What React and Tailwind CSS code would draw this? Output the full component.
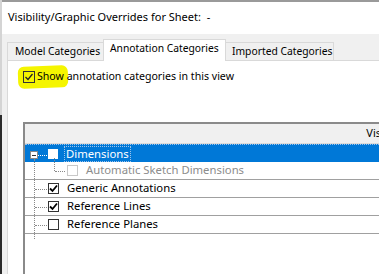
import React from "react";

const font = { fontFamily: '"Noto Sans", "Open Sans", sans-serif' };

function Check({ checked, disabled }) {
  return (
    <div
      className={
        "w-[11px] h-[11px] flex items-center justify-center border " +
        (disabled ? "border-[#c8c8c8] bg-white" : "border-[#333] bg-white")
      }
    >
      {checked && (
        <svg width="9" height="9" viewBox="0 0 9 9">
          <path d="M1 4.5 L3.5 7 L8 1.5" stroke="#000" strokeWidth="1.8" fill="none" />
        </svg>
      )}
    </div>
  );
}

function Row({ children, blue }) {
  return (
    <div
      className={
        "h-[18px] flex items-center relative shrink-0 whitespace-nowrap " +
        (blue ? "bg-[#0078d7] border-t border-dotted border-[#9ec3ea]" : "border-b border-[#a0a0a0]")
      }
    >
      {children}
    </div>
  );
}

export default function App() {
  return (
    <div className="w-[379px] h-[274px] overflow-hidden bg-[#f0f0f0] flex text-[#000]" style={font}>
      <div className="w-[2px] flex flex-col shrink-0">
        <div className="h-[115px] bg-[#d4d4d4]"></div>
        <div className="flex-1 bg-[#2b2b2b]"></div>
      </div>
      <div className="flex-1 flex flex-col min-w-0">
        <div className="h-[2px] bg-[#9a9a9a]"></div>
        <div className="h-[32px] bg-white flex items-center pl-[6px] pb-[1px] text-[11px] whitespace-nowrap">
          Visibility/Graphic Overrides for Sheet:&nbsp;&nbsp;-
        </div>
        <div className="flex-1 flex flex-col pl-[5px] pt-[4px]">
          <div className="h-[22px] flex items-end text-[10.3px] relative z-10 whitespace-nowrap">
            <div className="h-[18px] w-[97px] shrink-0 pl-[7px] flex items-center bg-[#f0f0f0] border border-[#d9d9d9] border-b-0">Model Categories</div>
            <div className="h-[22px] w-[123px] shrink-0 pl-[6px] flex items-center pb-[3px] bg-white border border-[#d9d9d9] border-b-0 -mb-px -ml-px">Annotation Categories</div>
            <div className="h-[18px] w-[108px] shrink-0 pl-[6px] flex items-center bg-[#f0f0f0] border border-[#d9d9d9] border-b-0 border-l-0">Imported Categories</div>
          </div>
          <div className="flex-1 bg-white border-l border-t border-[#d9d9d9] flex flex-col">
            <div className="flex items-center mt-[9px] ml-[15px] h-[13px] text-[10.6px] relative whitespace-nowrap">
              <div className="absolute left-[-5px] top-[-4px] w-[50px] h-[22px] bg-[#f5f500] rounded-[6px] -rotate-2"></div>
              <div className="relative w-[12px] h-[12px] border border-[#333] flex items-center justify-center shrink-0">
                <svg width="10" height="10" viewBox="0 0 10 10">
                  <path d="M1.5 5 L4 7.5 L8.5 2" stroke="#222" strokeWidth="1.3" fill="none" />
                </svg>
              </div>
              <span className="relative ml-[2px]">Show annotation categories in this view</span>
            </div>
            <div className="flex-1 mt-[39px] ml-[15px] border-l-2 border-t-2 border-[#8a8a8a] flex flex-col text-[11.3px]">
              <div className="h-[20px] shrink-0 bg-[#f0f0f0] flex items-center justify-end text-[11px] border-b border-[#dadada]">
                <span className="-mr-[2px]">Vis</span>
              </div>
              <Row blue>
                <div className="absolute left-[5px] top-[6px] w-[8px] h-[8px] bg-white border border-[#888] flex items-center justify-center">
                  <div className="w-[4px] h-px bg-[#333]"></div>
                </div>
                <div className="absolute left-[13px] top-[10px] w-[9px] border-t border-dotted border-white"></div>
                <div className="absolute left-[9px] top-[14px] h-[80px] border-l border-dotted border-[#888]"></div>
                <div className="ml-[23px] w-[10px] h-[10px] bg-white"></div>
                <span className="ml-[6px] px-[1px] text-white border border-dotted border-[#9ec3ea] leading-[14px]">Dimensions</span>
              </Row>
              <Row>
                <div className="absolute left-[29px] top-[-4px] h-[13px] border-l border-dotted border-[#888]"></div>
                <div className="absolute left-[30px] top-[9px] w-[10px] border-t border-dotted border-[#888]"></div>
                <div className="ml-[42px]"><Check disabled /></div>
                <span className="ml-[8px] text-[#8c8c8c]">Automatic Sketch Dimensions</span>
              </Row>
              <Row>
                <div className="absolute left-[10px] top-[9px] w-[12px] border-t border-dotted border-[#888]"></div>
                <div className="ml-[23px]"><Check checked /></div>
                <span className="ml-[8px]">Generic Annotations</span>
              </Row>
              <Row>
                <div className="absolute left-[10px] top-[9px] w-[12px] border-t border-dotted border-[#888]"></div>
                <div className="ml-[23px]"><Check checked /></div>
                <span className="ml-[8px]">Reference Lines</span>
              </Row>
              <Row>
                <div className="absolute left-[10px] top-[9px] w-[12px] border-t border-dotted border-[#888]"></div>
                <div className="ml-[23px]"><Check /></div>
                <span className="ml-[8px]">Reference Planes</span>
              </Row>
            </div>
          </div>
        </div>
      </div>
    </div>
  );
}
